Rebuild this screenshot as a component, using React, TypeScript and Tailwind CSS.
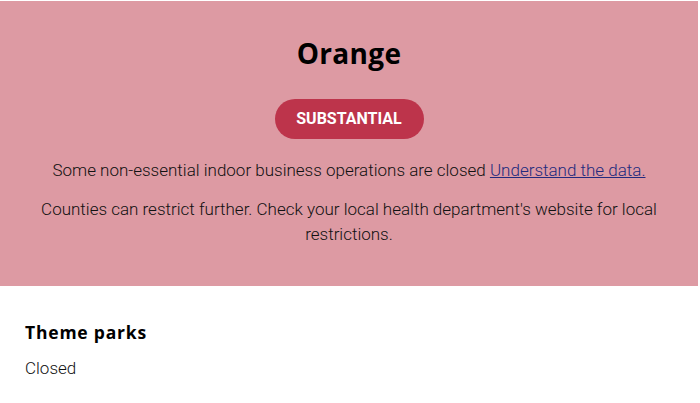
export default function App() {
  return (
    <div className="w-[700px] h-[403px] bg-white overflow-hidden" style={{ fontFamily: "Roboto, 'Liberation Sans', sans-serif" }}>
      <div className="mr-[2px] mt-px bg-[#dd9aa3] h-[285px] flex flex-col items-center pt-[36px]">
        <h1 className="text-[28px] leading-[32px] font-bold text-black font-['Open_Sans',sans-serif] tracking-[0.3px]">Orange</h1>
        <div className="mt-[30px] h-[40px] w-[149px] rounded-full bg-[#bd344b] flex items-center justify-center text-white text-[16px] font-bold">SUBSTANTIAL</div>
        <p className="mt-[19px] text-[17px] font-light leading-[25px] text-[#111] text-center">
          Some non-essential indoor business operations are closed{" "}
          <a href="#" className="text-[#232a7e] underline">Understand the data.</a>
        </p>
        <p className="mt-[14px] px-[40px] text-[17px] font-light leading-[25px] text-[#111] text-center">
          Counties can restrict further. Check your local health department's website for local restrictions.
        </p>
      </div>
      <div className="px-[25px] pt-[35px]">
        <h2 className="text-[17.5px] leading-[22px] font-bold text-black font-['Open_Sans',sans-serif] tracking-[0.8px]">Theme parks</h2>
        <p className="mt-[13px] text-[17px] font-light leading-[24px] text-[#111]">Closed</p>
      </div>
    </div>
  );
}
